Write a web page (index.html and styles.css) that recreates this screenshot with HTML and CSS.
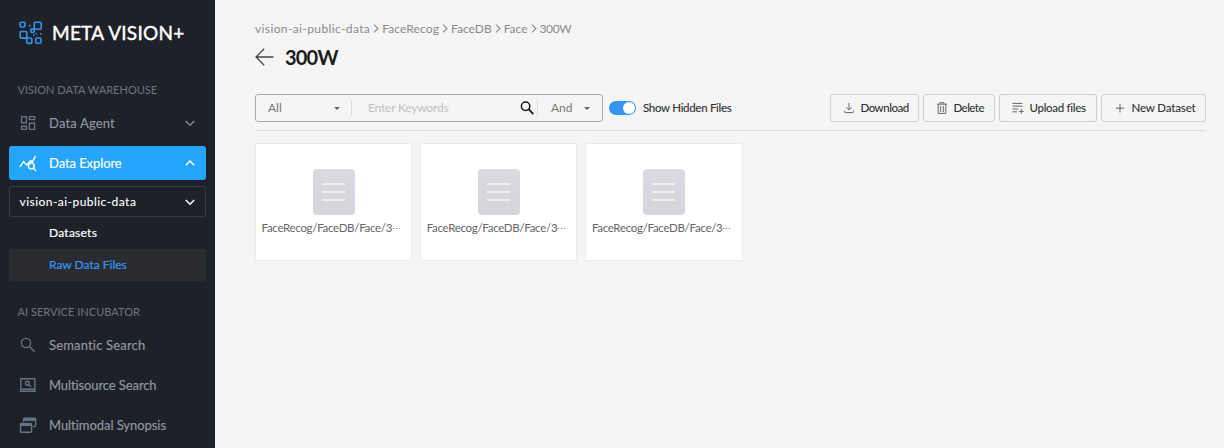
FILE: index.html
```html
<!DOCTYPE html>
<html lang="en">
<head>
<meta charset="utf-8">
<title>META VISION+</title>
<link rel="stylesheet" href="styles.css">
</head>
<body>
<div class="app">
  <aside class="sidebar">
    <div class="brand">
      <svg class="brand-icon" width="24" height="24" viewBox="0 0 24 24" fill="none" stroke="#3493ee" stroke-width="1.6">
        <rect x="1.2" y="1.2" width="4.8" height="4.8" rx="1"/><rect x="15.2" y="1.2" width="7" height="7" rx="1"/>
        <circle cx="13.5" cy="9.7" r="1.8"/><rect x="1.2" y="10.5" width="6.6" height="6.6" rx="1"/>
        <rect x="7.8" y="17" width="5" height="5.4" rx="1"/><rect x="16.8" y="17" width="5.2" height="5.2" rx="1"/>
        <path d="M10 4.6h1.6M14 14.3h1.6M21 12.7h1.6M16.5 12.7h1.4"/>
      </svg>
      <span class="brand-name">META VISION+</span>
    </div>
    <h2 class="section-title">VISION DATA WAREHOUSE</h2>
    <nav class="menu">
      <a class="item"><span class="item-icon"><svg width="18" height="18" viewBox="0 0 18 18" fill="none" stroke="currentColor" stroke-width="1.4"><path d="M2.6 2.6h4.8v6.2H2.6zM10.4 2.6h5.2v3h-5.2zM2.6 12.2h4.8v3.2H2.6zM10.4 9.2h5.2v6.2h-5.2z"/></svg></span><span class="label agent">Data Agent</span><svg class="chevron" width="12" height="12" viewBox="0 0 12 12" fill="none" stroke="currentColor" stroke-width="1.2"><path d="M1.7 4 6 8.2 10.3 4"/></svg></a>
      <a class="item active"><span class="item-icon"><svg width="18" height="18" viewBox="0 0 18 18" fill="none" stroke="currentColor" stroke-width="1.4"><path d="M.8 12.8 4.6 7.7l3 3.2 4-4.2 1.8 1.2 3.2-6.2"/><circle cx="12.3" cy="11.9" r="2.9"/><path d="m14.4 14.1 2.6 2.8"/></svg></span><span class="label explore">Data Explore</span><svg class="chevron" width="12" height="12" viewBox="0 0 12 12" fill="none" stroke="currentColor" stroke-width="1.5"><path d="M1.8 8.2 6 4l4.2 4.2"/></svg></a>
    </nav>
    <div class="bucket"><span class="bucket-name">vision-ai-public-data</span><svg class="chevron" width="12" height="12" viewBox="0 0 12 12" fill="none" stroke="currentColor" stroke-width="1.5"><path d="M1.8 4 6 8.2 10.2 4"/></svg></div>
    <a class="sub datasets">Datasets</a>
    <a class="sub selected">Raw Data Files</a>
    <h2 class="section-title incubator">AI SERVICE INCUBATOR</h2>
    <nav class="menu">
      <a class="item"><span class="item-icon"><svg width="18" height="18" viewBox="0 0 18 18" fill="none" stroke="currentColor" stroke-width="1.4"><circle cx="7" cy="7" r="4.6"/><path d="m10.3 10.3 5.4 5.4"/></svg></span><span class="label semantic">Semantic Search</span></a>
      <a class="item"><span class="item-icon"><svg width="18" height="18" viewBox="0 0 18 18" fill="none" stroke="currentColor" stroke-width="1.4"><path d="M1.8 2.8h14v10.4h-14zM.6 15.3h16.4"/><circle cx="8.4" cy="7.3" r="2"/><path d="m9.9 8.8 2.2 2.2"/></svg></span><span class="label multisource">Multisource Search</span></a>
      <a class="item"><span class="item-icon"><svg width="18" height="18" viewBox="0 0 18 18" fill="none" stroke="currentColor" stroke-width="1.4"><path d="M4.6 6V3.2q0-1 1-1h10q1 0 1 1v6.4q0 1-1 1h-2"/><path d="M4.6 3.4h12" stroke-width="3"/><rect x="1.5" y="7.4" width="11" height="8.8" rx="1"/><path d="M1.5 8.7h11" stroke-width="2.6"/></svg></span><span class="label synopsis">Multimodal Synopsis</span></a>
    </nav>
  </aside>
  <main class="main">
    <div class="crumbs">
      <span class="bucket-crumb">vision-ai-public-data</span><svg class="sep" viewBox="0 0 6 9"><path d="m1 .7 4 3.8-4 3.8"/></svg>
      <span class="recog-crumb">FaceRecog</span><svg class="sep" viewBox="0 0 6 9"><path d="m1 .7 4 3.8-4 3.8"/></svg>
      <span class="db-crumb">FaceDB</span><svg class="sep" viewBox="0 0 6 9"><path d="m1 .7 4 3.8-4 3.8"/></svg>
      <span class="face-crumb">Face</span><svg class="sep" viewBox="0 0 6 9"><path d="m1 .7 4 3.8-4 3.8"/></svg>
      <span class="last-crumb">300W</span>
    </div>
    <div class="title-row">
      <svg width="19" height="18" viewBox="0 0 19 18" fill="none" stroke="#444" stroke-width="1.3"><path d="M9.2.7 1 9l8.2 8.3M1 9h17.5"/></svg>
      <h1 class="title">300W</h1>
    </div>
    <div class="toolbar">
      <div class="search">
        <div class="scope"><span>All</span><i class="caret"></i></div>
        <div class="keywords"><span class="placeholder">Enter Keywords</span><svg width="14" height="14" viewBox="0 0 14 14" fill="none" stroke="#181818" stroke-width="1.5"><circle cx="5.6" cy="5.2" r="4.2"/><path d="m8.6 8.2 4.7 4.9" stroke-width="1.8"/></svg></div>
        <div class="operator"><span>And</span><i class="caret"></i></div>
      </div>
      <span class="toggle"><i class="knob"></i></span>
      <span class="toggle-label">Show Hidden Files</span>
      <div class="actions">
        <button class="btn download"><svg width="12" height="12" viewBox="0 0 12 12"><path d="M6 1v6.8M3.4 5.3 6 7.9l2.6-2.6M1.4 8.6v1q0 1 1 1h7.2q1 0 1-1v-1"/></svg><span>Download</span></button>
        <button class="btn delete"><svg width="12" height="12" viewBox="0 0 12 12"><path d="M1 2.2h10M4 2V.7h4V2M2.2 2.5v8.9h7.6V2.5M4.7 4v6M7.3 4v6"/></svg><span>Delete</span></button>
        <button class="btn upload"><svg width="12" height="12" viewBox="0 0 12 12"><path d="M.5 1.4h10M.5 4.2h10M.5 7h6M.5 9.8h4.5M9.3 7v4.8M6.9 9.4h4.8"/></svg><span>Upload files</span></button>
        <button class="btn new"><svg width="12" height="12" viewBox="0 0 12 12"><path d="M6 2v8.5M1.8 6.2h8.5"/></svg><span>New Dataset</span></button>
      </div>
    </div>
    <div class="files">
      <article class="card"><div class="doc"><i></i><i></i><i></i></div><p class="path">FaceRecog/FaceDB/Face/3<span class="more">⋯</span></p></article>
      <article class="card"><div class="doc"><i></i><i></i><i></i></div><p class="path">FaceRecog/FaceDB/Face/3<span class="more">⋯</span></p></article>
      <article class="card"><div class="doc"><i></i><i></i><i></i></div><p class="path">FaceRecog/FaceDB/Face/3<span class="more">⋯</span></p></article>
    </div>
  </main>
</div>
</body>
</html>
```
FILE: styles.css
```css
* { box-sizing: border-box; }
body { margin: 0; font-family: Lato, "Liberation Sans", sans-serif; font-variant-ligatures: none; background: #f5f5f5; }
svg { display: block; flex: none; }
h1, h2, p { margin: 0; }
span { white-space: nowrap; }
.app { display: flex; height: 448px; overflow: hidden; }
.sidebar { width: 215px; flex: none; background: #1e2128; padding: 0 9.5px 0 8.5px; overflow: hidden; }
.brand { display: flex; align-items: center; height: 48px; padding: 18px 0 0 10.5px; margin-bottom: 30px; }
.brand-icon { margin-right: 9px; }
.brand-name { color: #fff; font-size: 19px; line-height: 22px; font-weight: 400; letter-spacing: .25px; -webkit-text-stroke: .4px #fff; }
.section-title { height: 24px; line-height: 24px; margin: 0 0 4px 9px; font-size: 11px; font-weight: 400; color: #6b7582; letter-spacing: .03px; white-space: nowrap; }
.menu { display: flex; flex-direction: column; gap: 6px; }
.item { display: flex; align-items: center; height: 34px; padding: 0 10px; border-radius: 3px; color: #9299a3; font-size: 13px; }
.item-icon { width: 30.5px; color: #657386; }
.label { -webkit-text-stroke: .15px currentColor; }
.agent { letter-spacing: .17px; }
.explore { letter-spacing: -.08px; }
.semantic { letter-spacing: .17px; }
.multisource { letter-spacing: -.1px; }
.synopsis { letter-spacing: -.05px; }
.chevron { margin-left: auto; }
.item.active, .active .item-icon { color: #fff; }
.item.active { background: #25a5ff; }
.bucket { display: flex; align-items: center; height: 31px; margin-top: 6px; padding: 0 9px 0 10px; border: 1px solid #393c43; border-radius: 3px; color: #fff; font-size: 12px; font-weight: 500; }
.bucket-name { letter-spacing: .43px; }
.sub { display: flex; align-items: center; height: 32px; padding: 0 0 1px 40.5px; border-radius: 3px; font-size: 12px; color: #fff; letter-spacing: .25px; -webkit-text-stroke: .2px currentColor; }
.selected { background: #2b2c31; color: #3795ee; letter-spacing: 0; }
.incubator { margin: 19px 0 4px 9px; }
.main { flex: 1; padding: 18px 18px 0 40px; min-width: 0; }
.crumbs { display: flex; align-items: center; height: 20px; font-size: 12px; color: #8a8a8a; }
.bucket-crumb { letter-spacing: .38px; }
.recog-crumb { letter-spacing: .12px; }
.last-crumb { letter-spacing: -.4px; }
.sep { width: 6px; height: 9px; margin: 0 3px; fill: none; stroke: #8a8a8a; stroke-width: 1.1; }
.title-row { display: flex; align-items: center; height: 38px; gap: 11px; }
.title { font-size: 20px; font-weight: 700; color: #1b1b1b; letter-spacing: -.8px; }
.toolbar { display: flex; align-items: center; height: 55px; padding: 18px 0 8px; border-bottom: 1px solid #dedede; margin-bottom: 12px; }
.search { display: flex; align-items: center; width: 348px; height: 28px; border: 1px solid #a9a9a9; border-radius: 3px; font-size: 12px; color: #777; }
.search span { padding-bottom: 1px; }
.scope, .keywords, .operator { display: flex; align-items: center; justify-content: space-between; height: 16px; }
.scope { width: 95px; padding: 0 11px 0 12px; }
.keywords { width: 187px; padding: 0 3px 0 16px; border-left: 1px solid #dedede; border-right: 1px solid #dedede; }
.placeholder { color: #bfbfbf; letter-spacing: -.2px; }
.operator { width: 64px; padding: 0 12px 0 13px; }
.caret { border: 3.5px solid transparent; border-top-color: #666; border-bottom: 0; }
.toggle { display: flex; align-items: center; justify-content: flex-end; width: 27px; height: 14px; margin: 0 7px 0 6px; padding: 1px; border-radius: 7px; background: #3596f1; }
.knob { width: 12px; height: 12px; border-radius: 50%; background: #fff; }
.toggle-label { padding-bottom: 1px; font-size: 11.5px; color: #333; letter-spacing: -.3px; -webkit-text-stroke: .15px #333; }
.actions { display: flex; gap: 4px; margin-left: auto; }
.btn { display: flex; align-items: center; height: 28px; padding: 0 0 0 11.5px; gap: 6px; border: 1px solid #cfcfcf; border-radius: 3px; background: transparent; font: 500 11.5px Lato, sans-serif; color: #333; }
.btn span { padding-bottom: 1px; }
.btn svg { fill: none; stroke: #666; stroke-width: 1; }
.download { width: 89px; letter-spacing: -.5px; }
.delete { width: 72px; letter-spacing: -.55px; }
.upload { width: 98px; letter-spacing: -.3px; }
.new { width: 105px; letter-spacing: -.15px; }
.files { display: flex; gap: 8px; }
.card { width: 157.2px; height: 118px; background: #fff; border: 1px solid #ebebeb; padding: 25px 5.5px 0; }
.doc { display: flex; flex-direction: column; align-items: center; justify-content: center; gap: 6px; width: 42px; height: 46px; margin: 0 auto; border-radius: 4px; background: linear-gradient(#dadbe2, #d4d5da); }
.doc i { width: 23px; height: 2px; background: #edeef2; }
.path { height: 26px; line-height: 26px; font-size: 11.5px; color: #666; white-space: nowrap; letter-spacing: -.3px; }
.more { font-size: 9px; }
```
